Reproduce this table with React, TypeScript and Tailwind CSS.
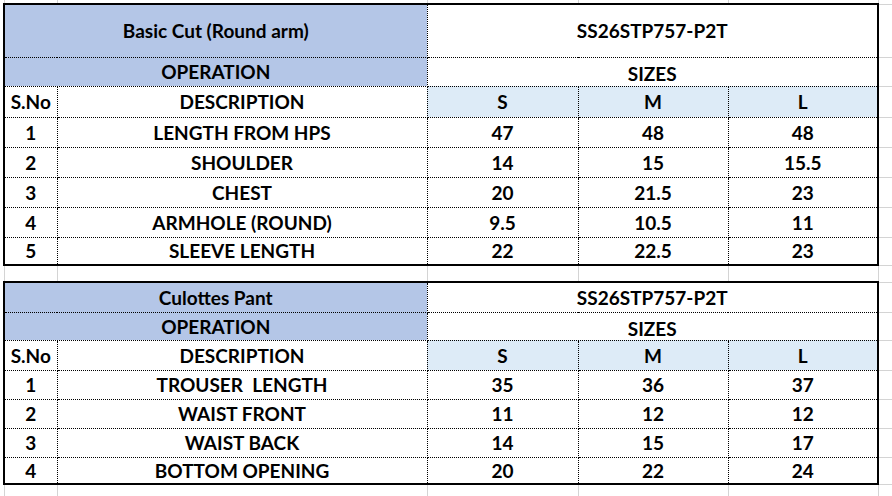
type Line = [string, string, string, string, string];

const top: Line[] = [
  ["1", "LENGTH FROM HPS", "47", "48", "48"],
  ["2", "SHOULDER", "14", "15", "15.5"],
  ["3", "CHEST", "20", "21.5", "23"],
  ["4", "ARMHOLE (ROUND)", "9.5", "10.5", "11"],
  ["5", "SLEEVE LENGTH", "22", "22.5", "23"],
];

const bottom: Line[] = [
  ["1", "TROUSER  LENGTH", "35", "36", "37"],
  ["2", "WAIST FRONT", "11", "12", "12"],
  ["3", "WAIST BACK", "14", "15", "17"],
  ["4", "BOTTOM OPENING", "20", "22", "24"],
];

const cell = "p-0 text-center align-middle border border-dotted border-black whitespace-pre";
const grid = "p-0 border-x border-x-[#d4d4d4]";

function Row({ h, children }: { h: string; children: React.ReactNode }) {
  return (
    <tr className={h}>
      <td className="p-0 border-r-2 border-r-black" />
      {children}
      <td className="p-0 border-l-2 border-l-black border-y border-y-[#d4d4d4]" />
    </tr>
  );
}

function Block({ title, code, heights, data }: { title: string; code: string; heights: string[]; data: Line[] }) {
  return (
    <>
      <Row h={heights[0]}>
        <td colSpan={2} className={cell + " bg-[#b4c6e7]"}>{title}</td>
        <td colSpan={3} className={cell}>{code}</td>
      </Row>
      <Row h={heights[1]}>
        <td colSpan={2} className={cell + " bg-[#b4c6e7]"}>OPERATION</td>
        <td colSpan={3} className={cell + " pt-1"}>SIZES</td>
      </Row>
      <Row h={heights[2]}>
        <td className={cell}>S.No</td>
        <td className={cell}>DESCRIPTION</td>
        <td className={cell + " bg-[#ddebf7]"}>S</td>
        <td className={cell + " bg-[#ddebf7]"}>M</td>
        <td className={cell + " bg-[#ddebf7]"}>L</td>
      </Row>
      {data.map((r, i) => (
        <Row key={i} h={heights[3 + i]}>
          {r.map((v, j) => (
            <td key={j} className={cell}>{v}</td>
          ))}
        </Row>
      ))}
    </>
  );
}

export default function App() {
  return (
    <div className="w-[892px] h-[496px] overflow-hidden bg-white text-black font-['Lato','Carlito',sans-serif] font-bold text-[19px] leading-none">
      <table className="table-fixed border-collapse w-[892px]">
        <colgroup>
          <col className="w-[4px]" />
          <col className="w-[53px]" />
          <col className="w-[370px]" />
          <col className="w-[151px]" />
          <col className="w-[150px]" />
          <col className="w-[150px]" />
          <col className="w-[14px]" />
        </colgroup>
        <tbody>
          <tr className="h-[4px]">
            <td className="p-0" />
            {[0, 1, 2, 3, 4].map((i) => (
              <td key={i} className={grid + " border-b-2 border-b-black"} />
            ))}
            <td className="p-0 border-l border-l-[#d4d4d4] border-b border-b-[#d4d4d4]" />
          </tr>
          <Block
            title="Basic Cut (Round arm)"
            code="SS26STP757-P2T"
            heights={["h-[53px]", "h-[29px]", "h-[31px]", "h-[30px]", "h-[30px]", "h-[30px]", "h-[30px]", "h-[28px]"]}
            data={top}
          />
          <tr className="h-[17px]">
            <td className="p-0" />
            {[0, 1, 2, 3, 4].map((i) => (
              <td key={i} className={grid + " border-y-2 border-y-black"} />
            ))}
            <td className="p-0 border-l border-l-[#d4d4d4] border-y border-y-[#d4d4d4]" />
          </tr>
          <Block
            title="Culottes Pant"
            code="SS26STP757-P2T"
            heights={["h-[30px]", "h-[28px]", "h-[30px]", "h-[29px]", "h-[29px]", "h-[29px]", "h-[27px]"]}
            data={bottom}
          />
          <tr className="h-[12px]">
            <td className="p-0" />
            {[0, 1, 2, 3, 4].map((i) => (
              <td key={i} className={grid + " border-t-2 border-t-black"} />
            ))}
            <td className="p-0 border-l border-l-[#d4d4d4] border-t border-t-[#d4d4d4]" />
          </tr>
        </tbody>
      </table>
    </div>
  );
}
